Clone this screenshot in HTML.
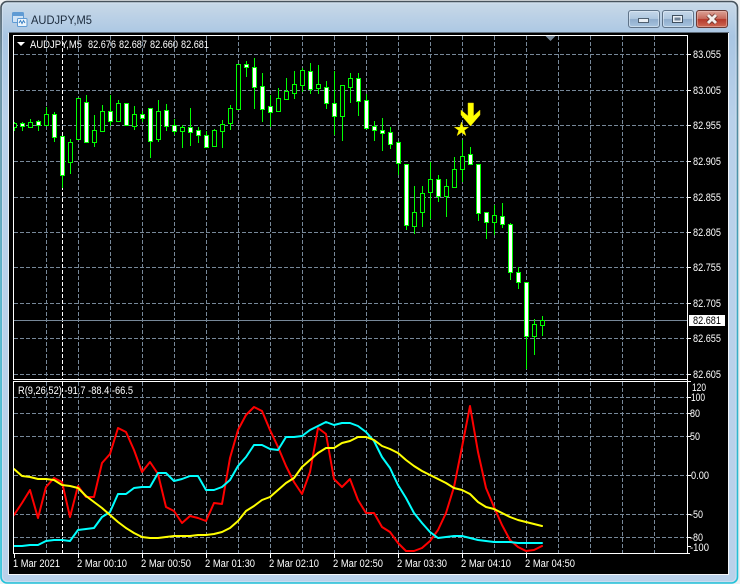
<!DOCTYPE html>
<html><head><meta charset="utf-8"><title>AUDJPY,M5</title>
<style>
html,body{margin:0;padding:0;background:#eef0f2;width:740px;height:584px;overflow:hidden}
svg{display:block;position:absolute;left:0;top:0}
text{font-family:"Liberation Sans",sans-serif;font-size:11px;fill:#fff}
.t{font-size:12px;fill:#1b2a3c}
.c{shape-rendering:crispEdges}
</style></head><body>
<svg width="740" height="584" viewBox="0 0 740 584">
<defs>
<linearGradient id="fr" x1="0" y1="0" x2="0" y2="1"><stop offset="0" stop-color="#c9d9e8"/><stop offset=".06" stop-color="#a9c6e3"/><stop offset=".2" stop-color="#b9d1ea"/><stop offset="1" stop-color="#b9d1ea"/></linearGradient>
<linearGradient id="bd" x1="0" y1="0" x2="0" y2="1"><stop offset="0" stop-color="#47525c"/><stop offset=".1" stop-color="#5a7f92"/><stop offset=".5" stop-color="#3fa9c2"/><stop offset="1" stop-color="#22c3d9"/></linearGradient>
<linearGradient id="btn" x1="0" y1="0" x2="0" y2="1"><stop offset="0" stop-color="#c6d8ea"/><stop offset=".48" stop-color="#afc8e0"/><stop offset=".52" stop-color="#8fadcc"/><stop offset="1" stop-color="#a9c5e0"/></linearGradient>
<linearGradient id="cls" x1="0" y1="0" x2="0" y2="1"><stop offset="0" stop-color="#dca499"/><stop offset=".48" stop-color="#c76a5c"/><stop offset=".52" stop-color="#b5392b"/><stop offset="1" stop-color="#cf6b55"/></linearGradient>
</defs>
<rect x="1" y="1.5" width="736.5" height="581.5" rx="6" ry="6" fill="url(#fr)" stroke="url(#bd)" stroke-width="1.6"/>
<rect x="2.5" y="3" width="733.5" height="578.5" rx="5" fill="none" stroke="#dce8f2" stroke-opacity=".55"/>

<!-- title -->
<g>
<rect x="12.5" y="12.5" width="11" height="10" rx="1" fill="#cfe3f6" stroke="#5f9bd4"/>
<rect x="13" y="13" width="10" height="3" fill="#5f9bd4"/>
<rect x="17.5" y="18.5" width="9.5" height="8" rx="1" fill="#eef6fc" stroke="#5f9bd4"/>
<path d="M19 23l1.5-2.5 1.5 3 1.5-3 1.5 2.5" fill="none" stroke="#3f83c4"/>
</g>
<text class="t" x="31" y="24" textLength="61" lengthAdjust="spacingAndGlyphs">AUDJPY,M5</text>

<!-- window buttons -->
<rect x="628.5" y="10.5" width="31" height="17" rx="2.5" fill="url(#btn)" stroke="#5f7388"/>
<rect x="629.5" y="11.5" width="29" height="15" rx="2" fill="none" stroke="#e3edf6" stroke-opacity=".6"/>
<rect x="638.5" y="18.5" width="10" height="4" fill="#e9eff5" stroke="#4e5f70"/>
<rect x="662.5" y="10.5" width="31" height="17" rx="2.5" fill="url(#btn)" stroke="#5f7388"/>
<rect x="663.5" y="11.5" width="29" height="15" rx="2" fill="none" stroke="#e3edf6" stroke-opacity=".6"/>
<rect x="672.5" y="15.5" width="10" height="7" fill="#e9eff5" stroke="#3f4f5f"/>
<rect x="674.5" y="17.5" width="6" height="3" fill="#6f8296"/>
<rect x="696.5" y="10.5" width="31" height="17" rx="2.5" fill="url(#cls)" stroke="#6a3a36"/>
<rect x="697.5" y="11.5" width="29" height="15" rx="2" fill="none" stroke="#eec2b8" stroke-opacity=".5"/>
<path d="M708 15l8 8M716 15l-8 8" stroke="#5d2a24" stroke-width="4.4"/>
<path d="M708 15l8 8M716 15l-8 8" stroke="#f4efec" stroke-width="3"/>

<!-- chart surface -->
<rect class="c" x="9" y="32" width="720" height="1" fill="#5e6b78"/>
<rect class="c" x="9" y="33" width="719" height="541" fill="#000"/>
<rect class="c" x="8" y="33" width="1" height="542" fill="#e9eef4"/>
<rect class="c" x="728" y="33" width="1" height="542" fill="#f4f6f9"/>
<rect class="c" x="8" y="574" width="721" height="1" fill="#f4f6f9"/>

<!-- grid -->
<g class="c" fill="none" stroke="#778899" stroke-dasharray="4 2">
<path d="M14 54.5H687M14 90.5H687M14 125.5H687M14 161.5H687M14 197.5H687M14 232.5H687M14 267.5H687M14 303.5H687M14 338.5H687M14 374.5H687"/>
<path d="M14 397.5H687M14 413.5H687M14 436.5H687M14 475.5H687M14 514.5H687M14 537.5H687"/>
<path d="M46.5 36V379M78.5 36V379M110.5 36V379M142.5 36V379M174.5 36V379M206.5 36V379M238.5 36V379M270.5 36V379M302.5 36V379M334.5 36V379M366.5 36V379M398.5 36V379M430.5 36V379M462.5 36V379M494.5 36V379M526.5 36V379M558.5 36V379M590.5 36V379M622.5 36V379M654.5 36V379"/>
<path d="M46.5 382V553M78.5 382V553M110.5 382V553M142.5 382V553M174.5 382V553M206.5 382V553M238.5 382V553M270.5 382V553M302.5 382V553M334.5 382V553M366.5 382V553M398.5 382V553M430.5 382V553M462.5 382V553M494.5 382V553M526.5 382V553M558.5 382V553M590.5 382V553M622.5 382V553M654.5 382V553"/>
</g>
<path class="c" d="M62.5 36V379M62.5 382V553" fill="none" stroke="#fff" stroke-dasharray="4 2"/>

<!-- current price line -->
<rect class="c" x="14" y="320" width="673" height="1" fill="#778899"/>

<!-- wicks -->
<path class="c" fill="none" stroke="#00ff00" d="M14.5 122V131M22.5 122V131M30.5 119V128M38.5 120V131M46.5 107V125M54.5 112V142M62.5 136V188M70.5 139V174M78.5 98V140M86.5 95V142M94.5 115V147M102.5 105V131M110.5 95V126M118.5 100V121M126.5 103V125M134.5 106V130M142.5 111V122M150.5 108V158M158.5 100V142M166.5 104V131M174.5 119V135M182.5 125V148M190.5 108V146M198.5 127V143M206.5 131V147M214.5 129V146M222.5 120V148M230.5 105V130M238.5 64V109M246.5 61V77M254.5 58V109M262.5 73V122M270.5 95V127M278.5 88V111M286.5 78V99M294.5 71V99M302.5 68V92M310.5 63V94M318.5 65V94M326.5 81V109M334.5 71V135M342.5 85V141M350.5 73V103M358.5 73V116M366.5 94V128M374.5 121V141M382.5 118V151M390.5 127V149M398.5 141V175M406.5 164V230M414.5 186V234M422.5 186V227M430.5 162V219M438.5 175V202M446.5 179V217M454.5 157V187M462.5 140V182M470.5 147V165M478.5 164V221M486.5 212V239M494.5 205V235M502.5 203V228M510.5 223V280M518.5 267V289M526.5 282V369M534.5 319V355M542.5 316V336"/>
<!-- hollow bodies -->
<g class="c" fill="#000" stroke="#00ff00">
<rect x="13.5" y="123.5" width="3" height="4"/><rect x="28.5" y="122.5" width="4" height="5"/><rect x="44.5" y="114.5" width="4" height="11"/><rect x="68.5" y="142.5" width="4" height="20"/><rect x="76.5" y="98.5" width="4" height="41"/><rect x="92.5" y="130.5" width="4" height="12"/><rect x="100.5" y="111.5" width="4" height="20"/><rect x="116.5" y="103.5" width="4" height="18"/><rect x="132.5" y="114.5" width="4" height="12"/><rect x="156.5" y="111.5" width="4" height="28"/><rect x="180.5" y="127.5" width="4" height="4"/><rect x="212.5" y="130.5" width="4" height="16"/><rect x="220.5" y="124.5" width="4" height="7"/><rect x="228.5" y="108.5" width="4" height="15"/><rect x="236.5" y="64.5" width="4" height="45"/><rect x="276.5" y="98.5" width="4" height="13"/><rect x="284.5" y="91.5" width="4" height="8"/><rect x="292.5" y="84.5" width="4" height="9"/><rect x="300.5" y="70.5" width="4" height="15"/><rect x="316.5" y="84.5" width="4" height="4"/><rect x="340.5" y="85.5" width="4" height="31"/><rect x="348.5" y="78.5" width="4" height="9"/><rect x="412.5" y="212.5" width="4" height="14"/><rect x="420.5" y="193.5" width="4" height="19"/><rect x="428.5" y="179.5" width="4" height="13"/><rect x="444.5" y="186.5" width="4" height="10"/><rect x="452.5" y="169.5" width="4" height="18"/><rect x="460.5" y="156.5" width="4" height="13"/><rect x="492.5" y="215.5" width="4" height="7"/><rect x="532.5" y="324.5" width="4" height="12"/><rect x="540.5" y="320.5" width="4" height="5"/>
</g>
<!-- filled bodies -->
<g class="c" fill="#fff" stroke="#00ff00">
<rect x="20.5" y="123.5" width="4" height="3"/><rect x="36.5" y="121.5" width="4" height="4"/><rect x="52.5" y="114.5" width="4" height="23"/><rect x="60.5" y="136.5" width="4" height="39"/><rect x="84.5" y="102.5" width="4" height="40"/><rect x="108.5" y="111.5" width="4" height="10"/><rect x="124.5" y="103.5" width="4" height="22"/><rect x="140.5" y="114.5" width="4" height="4"/><rect x="148.5" y="108.5" width="4" height="33"/><rect x="164.5" y="110.5" width="4" height="16"/><rect x="172.5" y="125.5" width="4" height="6"/><rect x="188.5" y="127.5" width="4" height="5"/><rect x="196.5" y="130.5" width="4" height="5"/><rect x="204.5" y="135.5" width="4" height="12"/><rect x="244.5" y="64.5" width="4" height="3"/><rect x="252.5" y="67.5" width="4" height="20"/><rect x="260.5" y="86.5" width="4" height="23"/><rect x="268.5" y="106.5" width="4" height="6"/><rect x="308.5" y="71.5" width="4" height="18"/><rect x="324.5" y="87.5" width="4" height="16"/><rect x="332.5" y="103.5" width="4" height="13"/><rect x="356.5" y="78.5" width="4" height="23"/><rect x="364.5" y="100.5" width="4" height="28"/><rect x="372.5" y="126.5" width="4" height="4"/><rect x="380.5" y="130.5" width="4" height="3"/><rect x="388.5" y="132.5" width="4" height="12"/><rect x="396.5" y="142.5" width="4" height="21"/><rect x="404.5" y="164.5" width="4" height="61"/><rect x="436.5" y="179.5" width="4" height="17"/><rect x="468.5" y="154.5" width="4" height="10"/><rect x="476.5" y="164.5" width="4" height="49"/><rect x="484.5" y="212.5" width="4" height="10"/><rect x="500.5" y="216.5" width="4" height="8"/><rect x="508.5" y="224.5" width="4" height="48"/><rect x="516.5" y="272.5" width="4" height="10"/><rect x="524.5" y="282.5" width="4" height="54"/>
</g>

<!-- arrow + star -->
<polygon points="468,103 473.5,103 473.5,116 480,110 480,115 470.5,126 461,115 461,110 468,116" fill="#ffff00" stroke="#e6cf00" stroke-width=".5"/>
<polygon points="461.5,122 463.2,127.2 468.6,127.2 464.3,130.4 465.9,135.6 461.5,132.4 457.1,135.6 458.7,130.4 454.4,127.2 459.8,127.2" fill="#ffff00" stroke="#e6cf00" stroke-width=".5"/>

<!-- indicator lines -->
<g fill="none" stroke-width="2" stroke-linejoin="round" stroke-linecap="round">
<polyline stroke="#ff0000" points="14,515 22,503 30,490 38,518 46,487 54,478 62,482 70,517 78,486 86,497 94,497 102,463 110,454 118,428 126,432 134,450 142,472 150,462 158,474 166,507 174,511 182,523 190,516 198,518 206,521 214,503 222,504 230,458 238,430 246,415 254,407 262,411 270,430 278,447 286,466 294,482 302,494 310,472 318,428 326,434 334,479 342,487 350,479 358,500 366,513 374,513 382,527 390,532 398,543 406,551 414,551 422,548 430,541 438,530 446,513 454,487 462,447 470,406 478,452 486,488 494,507 502,525 510,540 518,547 526,551 534,550 542,546"/>
<polyline stroke="#00ffff" points="14,546 22,546 30,545 38,545 46,541 54,540 62,540 70,541 78,530 86,529 94,528 102,517 110,512 118,494 126,494 134,488 142,487 150,487 158,473 166,473 174,481 182,479 190,476 198,476 206,490 214,490 222,487 230,480 238,466 246,457 254,445 262,445 270,449 278,450 286,437 294,437 302,436 310,430 318,426 326,422 334,425 342,423 350,423 358,426 366,432 374,441 382,457 390,468 398,485 406,498 414,513 422,523 430,532 438,538 446,537 454,536 462,536 470,538 478,540 486,541 494,542 502,542 510,542 518,543 526,543 534,543 542,543"/>
<polyline stroke="#ffff00" points="14,469 22,476 30,477 38,479 46,479 54,480 62,485 70,486 78,488 86,496 94,502 102,508 110,515 118,522 126,528 134,533 142,537 150,538 158,538 166,537 174,536 182,536 190,536 198,535 206,535 214,534 222,532 230,528 238,521 246,511 254,506 262,500 270,497 278,490 286,483 294,478 302,467 310,460 318,453 326,448 334,448 342,443 350,441 358,437 366,437 374,440 382,446 390,449 398,453 406,460 414,466 422,471 430,475 438,479 446,483 454,488 462,490 470,494 478,502 486,507 494,509 502,513 510,517 518,520 526,522 534,524 542,526"/>
</g>

<!-- chart frames -->
<g class="c" fill="#fff">
<rect x="13" y="35" width="675" height="1"/>
<rect x="13" y="35" width="1" height="345"/>
<rect x="687" y="35" width="1" height="346"/>
<rect x="13" y="379" width="675" height="1"/>
<rect x="13" y="381" width="675" height="1"/>
<rect x="13" y="381" width="1" height="173"/>
<rect x="687" y="381" width="1" height="173"/>
<rect x="13" y="553" width="675" height="1"/>
</g>
<polygon points="545.5,36 555.5,36 550.5,41" fill="#778899"/>
<polygon points="17,42 25,42 21,46" fill="#fff"/>

<!-- axis ticks -->
<path class="c" stroke="#fff" fill="none" d="M688 54.5H691M688 90.5H691M688 125.5H691M688 161.5H691M688 197.5H691M688 232.5H691M688 267.5H691M688 303.5H691M688 338.5H691M688 374.5H691M688 381.5H691M688 397.5H691M688 413.5H691M688 436.5H691M688 475.5H691M688 514.5H691M688 537.5H691M688 546.5H691M688 553.5H690M14.5 554V558M78.5 554V558M142.5 554V558M206.5 554V558M270.5 554V558M334.5 554V558M398.5 554V558M462.5 554V558M526.5 554V558"/>

<!-- labels -->
<text x="30" y="48" textLength="52" lengthAdjust="spacingAndGlyphs">AUDJPY,M5</text>
<text x="88" y="48" textLength="28" lengthAdjust="spacingAndGlyphs">82.676</text>
<text x="119" y="48" textLength="28" lengthAdjust="spacingAndGlyphs">82.687</text>
<text x="150" y="48" textLength="28" lengthAdjust="spacingAndGlyphs">82.660</text>
<text x="181" y="48" textLength="28" lengthAdjust="spacingAndGlyphs">82.681</text>

<text x="693" y="58" textLength="28" lengthAdjust="spacingAndGlyphs">83.055</text>
<text x="693" y="94" textLength="28" lengthAdjust="spacingAndGlyphs">83.005</text>
<text x="693" y="129" textLength="28" lengthAdjust="spacingAndGlyphs">82.955</text>
<text x="693" y="165" textLength="28" lengthAdjust="spacingAndGlyphs">82.905</text>
<text x="693" y="201" textLength="28" lengthAdjust="spacingAndGlyphs">82.855</text>
<text x="693" y="236" textLength="28" lengthAdjust="spacingAndGlyphs">82.805</text>
<text x="693" y="271" textLength="28" lengthAdjust="spacingAndGlyphs">82.755</text>
<text x="693" y="307" textLength="28" lengthAdjust="spacingAndGlyphs">82.705</text>
<text x="693" y="342" textLength="28" lengthAdjust="spacingAndGlyphs">82.655</text>
<text x="693" y="378" textLength="28" lengthAdjust="spacingAndGlyphs">82.605</text>
<rect class="c" x="689" y="315" width="36" height="11" fill="#fff"/>
<text x="693" y="324" textLength="28" lengthAdjust="spacingAndGlyphs" style="fill:#000">82.681</text>

<text x="692" y="391" textLength="14" lengthAdjust="spacingAndGlyphs">120</text>
<text x="691" y="401" textLength="14" lengthAdjust="spacingAndGlyphs">100</text>
<text x="690" y="417" textLength="10" lengthAdjust="spacingAndGlyphs">80</text>
<text x="690" y="440" textLength="10" lengthAdjust="spacingAndGlyphs">50</text>
<text x="691" y="479" textLength="18" lengthAdjust="spacingAndGlyphs">0.00</text>
<text x="690" y="518" textLength="13" lengthAdjust="spacingAndGlyphs">-50</text>
<text x="690" y="541" textLength="13" lengthAdjust="spacingAndGlyphs">-80</text>
<text x="690" y="551" textLength="19" lengthAdjust="spacingAndGlyphs">-100</text>

<text x="18" y="394" textLength="115" lengthAdjust="spacingAndGlyphs">R(9,26,52) -91.7 -88.4 -66.5</text>

<text x="13" y="567" textLength="47" lengthAdjust="spacingAndGlyphs">1 Mar 2021</text>
<text x="77" y="567" textLength="50" lengthAdjust="spacingAndGlyphs">2 Mar 00:10</text>
<text x="141" y="567" textLength="50" lengthAdjust="spacingAndGlyphs">2 Mar 00:50</text>
<text x="205" y="567" textLength="50" lengthAdjust="spacingAndGlyphs">2 Mar 01:30</text>
<text x="269" y="567" textLength="50" lengthAdjust="spacingAndGlyphs">2 Mar 02:10</text>
<text x="333" y="567" textLength="50" lengthAdjust="spacingAndGlyphs">2 Mar 02:50</text>
<text x="397" y="567" textLength="50" lengthAdjust="spacingAndGlyphs">2 Mar 03:30</text>
<text x="461" y="567" textLength="50" lengthAdjust="spacingAndGlyphs">2 Mar 04:10</text>
<text x="525" y="567" textLength="50" lengthAdjust="spacingAndGlyphs">2 Mar 04:50</text>
</svg>
</body></html>
